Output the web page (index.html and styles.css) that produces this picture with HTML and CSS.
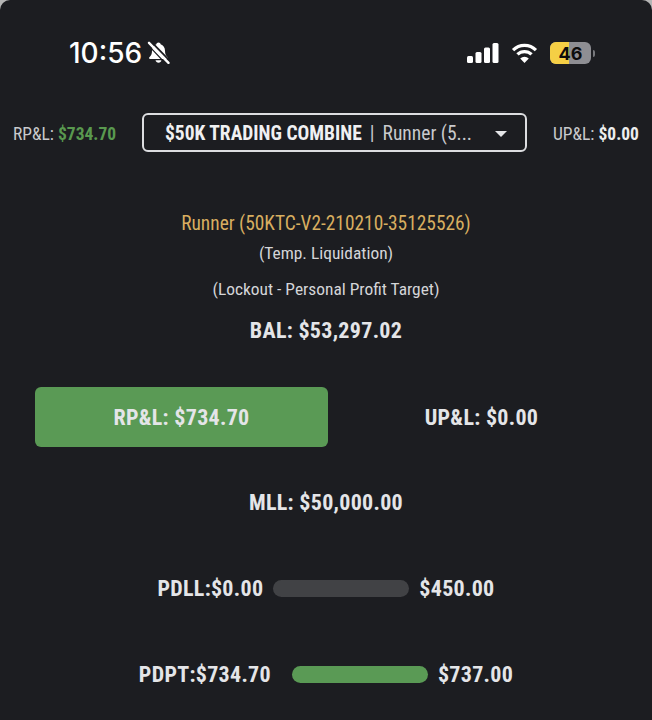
FILE: index.html
```html
<!DOCTYPE html>
<html lang="en">
<head>
<meta charset="utf-8">
<title>Runner account</title>
<link rel="stylesheet" href="styles.css">
</head>
<body>
<div class="screen">
  <div class="status">
    <div class="status-left">
      <span class="time">10:56</span>
      <svg class="bell" width="23" height="23" viewBox="0 0 23 23">
        <path fill="#fff" d="M11.500 1.500c-1.200 0-2 .8-2.100 1.800C6.600 4.200 5 6.600 5 9.800c0 3.400-1 5-2.600 6.400-.7.7-.3 1.800.8 1.800h16.600c1.100 0 1.500-1.100.8-1.800C19 14.800 18 13.200 18 9.800c0-3.200-1.600-5.600-4.400-6.500-.1-1-.9-1.800-2.100-1.800z"/>
        <path fill="#fff" d="M8.500 19.300h6c-.3 1.400-1.500 2.400-3 2.400s-2.700-1-3-2.400z"/>
        <path stroke="#1c1d21" stroke-width="1.800" d="M3.500 0l20 20.500"/>
        <path stroke="#1c1d21" stroke-width="1.200" d="M0 3l19 20"/>
        <path stroke="#fff" stroke-width="2.400" stroke-linecap="round" d="M2 1.800l19.500 20"/>
      </svg>
    </div>
    <div class="status-right">
      <svg width="32" height="20" viewBox="0 0 32 20"><g fill="#fff"><rect x="0" y="13" width="6" height="7" rx="1.500"/><rect x="8.500" y="9" width="6" height="11" rx="1.500"/><rect x="17" y="4.500" width="6" height="15.500" rx="1.500"/><rect x="25.500" y="0" width="6" height="20" rx="1.500"/></g></svg>
      <svg class="wifi" width="27" height="20" viewBox="0 0 28 21"><g fill="none" stroke="#fff" stroke-width="3.400"><path d="M2 7.500a17 17 0 0 1 24 0"/><path d="M6.600 12a10.500 10.500 0 0 1 14.800 0"/></g><path fill="#fff" d="M14 21l-4.500-4.800a6.400 6.400 0 0 1 9 0z"/></svg>
      <div class="battery"><div class="battery-body"><span class="battery-fill"></span><span class="battery-num">46</span></div><span class="battery-cap"></span></div>
    </div>
  </div>

  <div class="topbar">
    <div class="top-stat">RP&amp;L: <b class="green">$734.70</b></div>
    <div class="select">
      <span class="select-text"><b>$50K TRADING COMBINE</b><span class="sep">|</span>Runner (5...</span>
      <span class="caret"></span>
    </div>
    <div class="top-stat">UP&amp;L: <b>$0.00</b></div>
  </div>

  <div class="info">
    <div class="name">Runner (50KTC-V2-210210-35125526)</div>
    <div class="note">(Temp. Liquidation)</div>
    <div class="note second">(Lockout - Personal Profit Target)</div>
    <div class="metric bal">BAL: $53,297.02</div>
  </div>

  <div class="pnl">
    <div class="pnl-btn metric">RP&amp;L: $734.70</div>
    <div class="metric pnl-side">UP&amp;L: $0.00</div>
  </div>

  <div class="metric mll">MLL: $50,000.00</div>

  <div class="meter meter-pdll">
    <span class="metric">PDLL:$0.00</span>
    <span class="bar"></span>
    <span class="metric">$450.00</span>
  </div>
  <div class="meter meter-pdpt">
    <span class="metric">PDPT:$734.70</span>
    <span class="bar bar-full"></span>
    <span class="metric">$737.00</span>
  </div>
</div>
</body>
</html>
```

FILE: styles.css
```css
* { box-sizing: border-box; }
html, body { margin: 0; padding: 0; background: #b5b5b5; }
body { width: 652px; height: 720px; overflow: hidden; }
.screen {
  width: 652px; height: 720px; overflow: hidden;
  background: #1c1d21; color: #e4e5e8;
  border-radius: 10px 10px 0 0;
  padding-top: 33px;
  font-family: Roboto, "Liberation Sans", sans-serif;
  font-stretch: 75%;
}
.status { display: flex; justify-content: space-between; align-items: center; height: 40px; padding: 0 57px 0 69px; }
.status-left { display: flex; align-items: center; gap: 5px; }
.time { font-family: Inter, "Liberation Sans", sans-serif; font-stretch: 100%; font-size: 28px; font-weight: 500; color: #fff; }
.bell { display: block; margin-top: -1px; }
.status-right { display: flex; align-items: center; gap: 12px; }
.status-right svg { display: block; }
.battery { display: flex; align-items: center; gap: 2px; }
.battery-body { position: relative; width: 41px; height: 22px; border-radius: 6px; background: #8e8e93; overflow: hidden; display: flex; align-items: center; justify-content: center; }
.battery-fill { position: absolute; left: 0; top: 0; bottom: 0; width: 19px; background: #f5cf45; }
.battery-num { position: relative; font-family: Inter, "Liberation Sans", sans-serif; font-stretch: 100%; font-size: 18px; font-weight: 700; color: #0c0c0c; }
.battery-cap { width: 2px; height: 7px; background: #77787c; border-radius: 0 2px 2px 0; }
.topbar { display: flex; align-items: center; height: 39px; margin-top: 40px; padding: 0 13px; }
.top-stat { font-size: 17.500px; color: #c9cacd; white-space: nowrap; width: 129px; padding-top: 2px; }
.top-stat:last-child { width: auto; margin-left: 26px; }
.top-stat b { font-weight: 700; color: #eceded; }
.top-stat b.green { color: #59994f; }
.select { width: 385px; height: 39px; border: 2px solid #dcdde0; border-radius: 6px; display: flex; align-items: center; justify-content: space-between; padding: 2px 18px 0 21px; font-size: 19.500px; color: #c9cacd; }
.select b { font-weight: 700; color: #f0f0f2; }
.select-text { white-space: nowrap; }
.sep { margin: 0 8px; }
.caret { width: 0; height: 0; border-left: 6px solid transparent; border-right: 6px solid transparent; border-top: 6px solid #e4e5e8; }
.info { display: flex; flex-direction: column; align-items: center; margin-top: 58px; }
.name { font-size: 19.400px; color: #d8ae60; line-height: 28px; }
.note { font-size: 17.400px; color: #d4d5d8; line-height: 24px; margin-top: 3px; }
.note.second { margin-top: 12px; }
.metric { font-size: 22px; font-weight: 700; color: #e4e5e8; white-space: nowrap; letter-spacing: .3px; }
.bal { margin-top: 15px; line-height: 30px; }
.pnl { display: grid; grid-template-columns: 293px 293px; column-gap: 7px; margin-top: 41px; padding-left: 35px; align-items: center; }
.pnl-btn { height: 60px; background: #5a9a55; border-radius: 6px; display: flex; align-items: center; justify-content: center; }
.pnl-side { text-align: center; }
.mll { text-align: center; line-height: 30px; margin-top: 41px; }
.meter { display: flex; align-items: center; height: 30px; gap: 10px; justify-content: center; }
.meter-pdll { margin-top: 55px; }
.meter-pdpt { margin-top: 56px; gap: 21px; }
.meter-pdpt .bar { margin-right: -11px; }
.bar { width: 136px; height: 17px; border-radius: 8.500px; background: #414245; }
.bar-full { background: #5a9a55; }
```
